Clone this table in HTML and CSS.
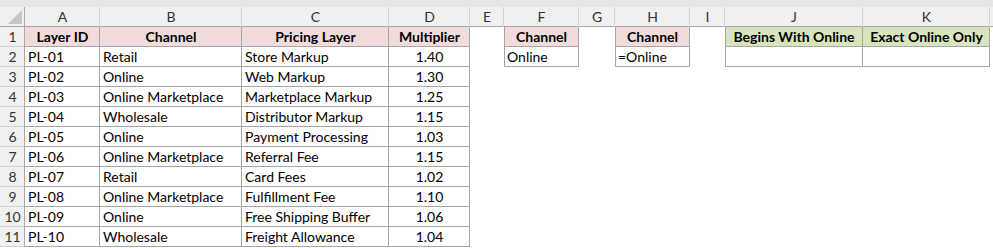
FILE: index.html
```html
<!DOCTYPE html>
<html>
<head>
<meta charset="utf-8">
<link rel="stylesheet" href="styles.css">
</head>
<body>
<div class="band"></div>
<div class="sheet">
  <div class="corner"><span class="tri"></span></div>
  <div class="ch">A</div><div class="ch">B</div><div class="ch">C</div><div class="ch">D</div><div class="ch">E</div><div class="ch">F</div><div class="ch">G</div><div class="ch">H</div><div class="ch">I</div><div class="ch">J</div><div class="ch">K</div><div class="ch end"></div>

  <div class="rh">1</div>
  <div class="c b hp">Layer ID</div><div class="c b hp">Channel</div><div class="c b hp">Pricing Layer</div><div class="c b hp">Multiplier</div>
  <div class="c"></div><div class="c b l hp">Channel</div><div class="c"></div><div class="c b l hp">Channel</div><div class="c"></div><div class="c b l hg">Begins With Online</div><div class="c b hg">Exact Online Only</div><div class="c"></div>

  <div class="rh">2</div>
  <div class="c b">PL-01</div><div class="c b">Retail</div><div class="c b">Store Markup</div><div class="c b n">1.40</div>
  <div class="c"></div><div class="c b l">Online</div><div class="c"></div><div class="c b l">=Online</div><div class="c"></div><div class="c b l"></div><div class="c b"></div><div class="c"></div>

  <div class="rh">3</div>
  <div class="c b">PL-02</div><div class="c b">Online</div><div class="c b">Web Markup</div><div class="c b n">1.30</div>
  <div class="c"></div><div class="c"></div><div class="c"></div><div class="c"></div><div class="c"></div><div class="c"></div><div class="c"></div><div class="c"></div>

  <div class="rh">4</div>
  <div class="c b">PL-03</div><div class="c b">Online Marketplace</div><div class="c b">Marketplace Markup</div><div class="c b n">1.25</div>
  <div class="c"></div><div class="c"></div><div class="c"></div><div class="c"></div><div class="c"></div><div class="c"></div><div class="c"></div><div class="c"></div>

  <div class="rh">5</div>
  <div class="c b">PL-04</div><div class="c b">Wholesale</div><div class="c b">Distributor Markup</div><div class="c b n">1.15</div>
  <div class="c"></div><div class="c"></div><div class="c"></div><div class="c"></div><div class="c"></div><div class="c"></div><div class="c"></div><div class="c"></div>

  <div class="rh">6</div>
  <div class="c b">PL-05</div><div class="c b">Online</div><div class="c b">Payment Processing</div><div class="c b n">1.03</div>
  <div class="c"></div><div class="c"></div><div class="c"></div><div class="c"></div><div class="c"></div><div class="c"></div><div class="c"></div><div class="c"></div>

  <div class="rh">7</div>
  <div class="c b">PL-06</div><div class="c b">Online Marketplace</div><div class="c b">Referral Fee</div><div class="c b n">1.15</div>
  <div class="c"></div><div class="c"></div><div class="c"></div><div class="c"></div><div class="c"></div><div class="c"></div><div class="c"></div><div class="c"></div>

  <div class="rh">8</div>
  <div class="c b">PL-07</div><div class="c b">Retail</div><div class="c b">Card Fees</div><div class="c b n">1.02</div>
  <div class="c"></div><div class="c"></div><div class="c"></div><div class="c"></div><div class="c"></div><div class="c"></div><div class="c"></div><div class="c"></div>

  <div class="rh">9</div>
  <div class="c b">PL-08</div><div class="c b">Online Marketplace</div><div class="c b">Fulfillment Fee</div><div class="c b n">1.10</div>
  <div class="c"></div><div class="c"></div><div class="c"></div><div class="c"></div><div class="c"></div><div class="c"></div><div class="c"></div><div class="c"></div>

  <div class="rh">10</div>
  <div class="c b">PL-09</div><div class="c b">Online</div><div class="c b">Free Shipping Buffer</div><div class="c b n">1.06</div>
  <div class="c"></div><div class="c"></div><div class="c"></div><div class="c"></div><div class="c"></div><div class="c"></div><div class="c"></div><div class="c"></div>

  <div class="rh">11</div>
  <div class="c b">PL-10</div><div class="c b">Wholesale</div><div class="c b">Freight Allowance</div><div class="c b n">1.04</div>
  <div class="c"></div><div class="c"></div><div class="c"></div><div class="c"></div><div class="c"></div><div class="c"></div><div class="c"></div><div class="c"></div>
</div>
</body>
</html>
```

FILE: styles.css
```css
html, body {
  margin: 0;
  padding: 0;
  background: #ffffff;
}
body {
  width: 993px;
  height: 248px;
  overflow: hidden;
  font-family: Lato, "Liberation Sans", sans-serif;
  font-size: 14px;
  color: #000000;
}
.band {
  height: 7px;
  background: #e6e6e6;
}
.sheet {
  display: grid;
  grid-template-columns: 25px 75px 142px 147px 81px 34px 75px 36px 75px 35px 138px 127px 3px;
  grid-auto-rows: 20px;
}
.corner {
  position: relative;
  background: #f0f0f0;
  box-shadow: inset -1px -1px 0 #a9a9a9;
}
.tri {
  position: absolute;
  right: 3px;
  bottom: 3px;
  width: 0;
  height: 0;
  border-left: 14px solid transparent;
  border-bottom: 14px solid #c4c4c4;
}
.ch {
  background: #f0f0f0;
  color: #333333;
  text-align: center;
  line-height: 20px;
  font-size: 14px;
  box-shadow: inset -1px 0 0 #d4d4d4, inset 0 -1px 0 #a9a9a9;
}
.ch.end {
  box-shadow: inset 0 -1px 0 #a9a9a9;
}
.rh {
  background: #f0f0f0;
  color: #333333;
  text-align: center;
  line-height: 20px;
  font-size: 14px;
  box-shadow: inset -1px 0 0 #a9a9a9, inset 0 -1px 0 #d4d4d4;
}
.c {
  line-height: 20px;
  padding-left: 3px;
  white-space: nowrap;
  overflow: hidden;
}
.c.b {
  box-shadow: inset -1px -1px 0 #a6a6a6;
}
.c.b.l {
  box-shadow: inset -1px -1px 0 #a6a6a6, inset 1px 0 0 #a6a6a6;
}
.hp {
  background: #f2dcdb;
  font-weight: bold;
  text-align: center;
  padding-left: 0;
}
.hg {
  background: #d8e4bc;
  font-weight: bold;
  text-align: center;
  padding-left: 0;
}
.n {
  text-align: center;
  padding-left: 0;
}
```
